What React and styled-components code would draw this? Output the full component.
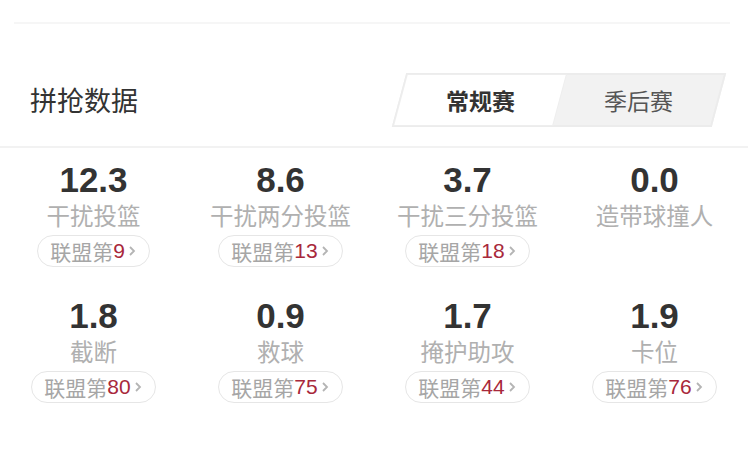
import React from 'react';
import styled, { createGlobalStyle } from 'styled-components';

const stats = [
  { value: '12.3', label: '干扰投篮', rank: 9 },
  { value: '8.6', label: '干扰两分投篮', rank: 13 },
  { value: '3.7', label: '干扰三分投篮', rank: 18 },
  { value: '0.0', label: '造带球撞人' },
  { value: '1.8', label: '截断', rank: 80 },
  { value: '0.9', label: '救球', rank: 75 },
  { value: '1.7', label: '掩护助攻', rank: 44 },
  { value: '1.9', label: '卡位', rank: 76 },
];

function Chevron() {
  return (
    <svg width="8" height="12" viewBox="0 0 8 12">
      <path d="M2 2 L6 6 L2 10" fill="none" stroke="#b4b4b4" strokeWidth="1.8" />
    </svg>
  );
}

function StatCell({ stat }) {
  return (
    <Cell>
      <Value>{stat.value}</Value>
      <Label>{stat.label}</Label>
      {stat.rank !== undefined && (
        <RankPill>
          联盟第<RankNum>{stat.rank}</RankNum>
          <Chevron />
        </RankPill>
      )}
    </Cell>
  );
}

export default function App() {
  return (
    <Page>
      <GlobalStyle />
      <TopLine />
      <Header>
        <Title>拼抢数据</Title>
        <Tabs>
          <Tab active>
            <TabText active>常规赛</TabText>
          </Tab>
          <Tab>
            <TabText>季后赛</TabText>
          </Tab>
        </Tabs>
      </Header>
      <Divider />
      <Grid>
        {stats.map((s) => (
          <StatCell key={s.label} stat={s} />
        ))}
      </Grid>
    </Page>
  );
}

const GlobalStyle = createGlobalStyle`
  body {
    margin: 0;
    background: #fff;
    font-family: "Noto Sans CJK SC", "Noto Sans", sans-serif;
  }
`;

const Page = styled.div`
  width: 748px;
  height: 471px;
  overflow: hidden;
  background: #fff;
  padding-top: 22px;
  box-sizing: border-box;
`;

const TopLine = styled.div`
  margin: 0 18px 0 14px;
  height: 2px;
  background: #f6f6f6;
`;

const Header = styled.div`
  display: flex;
  align-items: center;
  justify-content: space-between;
  padding: 49px 29px 19px 30px;
`;

const Title = styled.div`
  font-size: 27px;
  color: #333;
  line-height: 1;
  margin-top: -2px;
`;

const Tabs = styled.div`
  display: flex;
  width: 320px;
  height: 54px;
  box-sizing: border-box;
  background: #f2f2f2;
  border: 2px solid #ececec;
  transform: skewX(-15deg);
`;

const Tab = styled.div`
  flex: 1;
  display: flex;
  align-items: center;
  justify-content: center;
  background: ${(p) => (p.active ? '#fff' : 'transparent')};
  box-shadow: ${(p) => (p.active ? '0 0 0 1px #eee' : 'none')};
`;

const TabText = styled.span`
  transform: skewX(15deg);
  font-size: 23px;
  font-weight: ${(p) => (p.active ? 700 : 400)};
  color: ${(p) => (p.active ? '#333' : '#555')};
`;

const Divider = styled.div`
  height: 2px;
  background: #f2f2f2;
`;

const Grid = styled.div`
  display: grid;
  grid-template-columns: repeat(4, 1fr);
  grid-auto-rows: 136px;
  padding-top: 14px;
`;

const Cell = styled.div`
  display: flex;
  flex-direction: column;
  align-items: center;
`;

const Value = styled.div`
  font-family: "Liberation Sans", Arial, sans-serif;
  font-weight: 700;
  font-size: 35px;
  line-height: 36px;
  color: #333;
`;

const Label = styled.div`
  font-size: 23.5px;
  line-height: 34px;
  color: #b0b0b0;
  white-space: nowrap;
`;

const RankPill = styled.div`
  margin-top: 3px;
  height: 32px;
  box-sizing: border-box;
  display: flex;
  align-items: center;
  gap: 3px;
  padding: 0 13px 0 12px;
  border: 1.5px solid #e6e6e6;
  border-radius: 16px;
  font-size: 21px;
  color: #a6a6a6;
  white-space: nowrap;
`;

const RankNum = styled.span`
  font-family: "Liberation Sans", Arial, sans-serif;
  font-size: 21px;
  color: #a8283b;
  margin-left: -3px;
`;
